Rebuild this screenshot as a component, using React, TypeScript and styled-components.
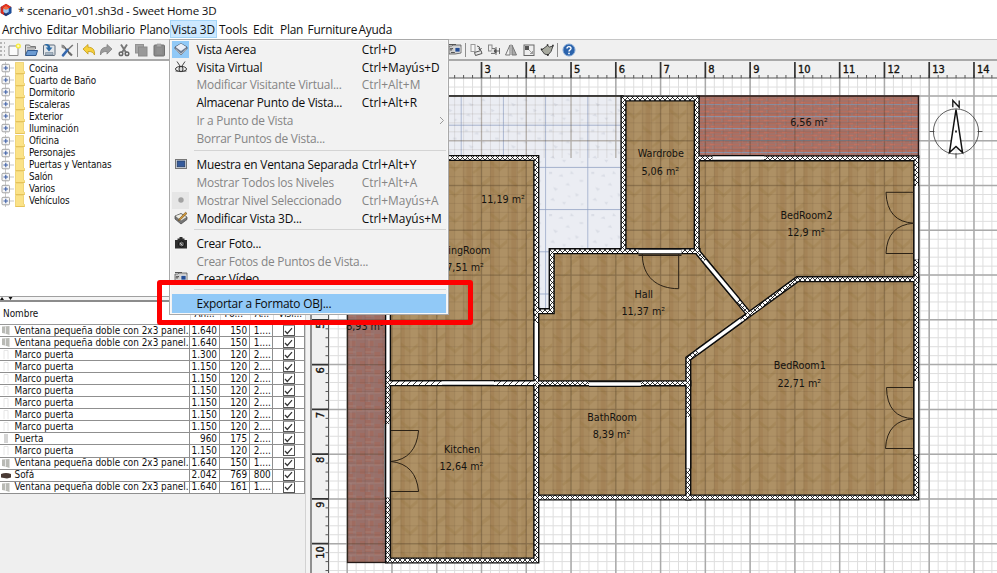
import React from "react";
import styled, { createGlobalStyle } from "styled-components";

const Global = createGlobalStyle`
  html, body { margin: 0; padding: 0; background: #fff; overflow: hidden; }
  *, *::before, *::after { box-sizing: border-box; }
`;

const uiFont = `"Open Sans", "Noto Sans", sans-serif`;
const denseFont = `"DejaVu Sans Condensed", "DejaVu Sans", sans-serif`;

const Window = styled.div`
  position: relative;
  width: 997px;
  height: 573px;
  display: flex;
  flex-direction: column;
  overflow: hidden;
  background: #fff;
  color: #111;
  font-family: ${uiFont};
`;

const TitleBar = styled.header`
  height: 20px;
  flex: none;
  display: flex;
  align-items: center;
  gap: 6px;
  font-size: 11.6px;
  letter-spacing: -0.18px;
  white-space: pre;
  svg { flex: none; }
`;

const MenuBar = styled.nav`
  height: 19px;
  flex: none;
  display: flex;
  font-size: 11.9px;
  letter-spacing: -0.22px;
`;

const MenuTitle = styled.div<{ $w: number; $active?: boolean }>`
  width: ${(p) => p.$w}px;
  flex: none;
  padding-left: 2px;
  height: 18px;
  line-height: 19px;
  white-space: nowrap;
  background: ${(p) => (p.$active ? "#cce8ff" : "transparent")};
  box-shadow: ${(p) => (p.$active ? "inset 0 0 0 1px #a4d5f8" : "none")};
`;

const Toolbar = styled.div`
  height: 22px;
  flex: none;
  display: flex;
  align-items: center;
  background: #f0f0f0;
  border-top: 1px solid #c6c6c6;
  border-bottom: 2px solid #a9a9a9;
`;

const ToolSlot = styled.div`
  width: 17.6px;
  height: 16px;
  flex: none;
  display: flex;
  align-items: center;
  justify-content: center;
`;

const Grip = styled.div`
  width: 5px;
  height: 15px;
  background: radial-gradient(circle at 1px 1px, #b5b5b5 1px, transparent 1.2px) 0 0 / 4px 4px;
`;

const ToolRule = styled.div<{ $before: number; $after: number }>`
  width: 1px;
  height: 14px;
  flex: none;
  margin: 0 ${(p) => p.$after}px 0 ${(p) => p.$before}px;
  background: #8e8e8e;
`;

const ToolGap = styled.div`
  width: 278px;
  flex: none;
`;

const Workspace = styled.div`
  flex: 1;
  display: flex;
  min-height: 0;
`;

const SidePane = styled.aside`
  width: 306px;
  flex: none;
  display: flex;
  flex-direction: column;
  background: #efefef;
  border-right: 1px solid #d2d2d2;
  font-family: ${denseFont};
`;

const Tree = styled.ul`
  list-style: none;
  margin: 0;
  padding: 1px 0 0;
  height: 235px;
  flex: none;
  background: #fff;
  font-size: 9.8px;
  letter-spacing: -0.12px;
`;

const TreeRow = styled.li`
  height: 12.09px;
  display: flex;
  align-items: center;
  white-space: nowrap;
  svg { flex: none; margin-right: 4px; }
`;

const PaneDivider = styled.div`
  height: 6px;
  flex: none;
  background: #f4f4f4;
  border-top: 1px solid #a0a0a0;
  border-bottom: 2px solid #8c8c8c;
  svg { display: block; }
`;

const columns = "189.5px 30px 30.2px 23.6px 31.7px";

const TableHead = styled.div`
  height: 22px;
  flex: none;
  display: grid;
  grid-template-columns: ${columns};
  align-items: center;
  background: #fff;
  font-size: 9.9px;
  line-height: 20px;
`;

const HeadCell = styled.div<{ $first?: boolean }>`
  padding-left: ${(p) => (p.$first ? 3 : 4)}px;
  border-left: ${(p) => (p.$first ? "none" : "1px solid #ddd")};
  height: 22px;
  line-height: 24px;
  white-space: nowrap;
`;

const TableBody = styled.div`
  flex: none;
  background: #fff;
  border-top: 1px solid #999;
`;

const TableRow = styled.div`
  height: 12.06px;
  display: grid;
  grid-template-columns: ${columns};
  font-size: 9.9px;
  line-height: 11.6px;
`;

const Cell = styled.div<{ $num?: boolean; $check?: boolean }>`
  display: flex;
  align-items: center;
  justify-content: ${(p) => (p.$num ? "flex-end" : p.$check ? "center" : "flex-start")};
  padding-right: ${(p) => (p.$num ? 1.5 : 0)}px;
  white-space: nowrap;
  overflow: hidden;
  border-right: 1px solid #8f8f8f;
  border-bottom: 1px solid #8f8f8f;
  svg { flex: none; }
`;

const CheckBox = styled.span`
  width: 12px;
  height: 11px;
  border: 1px solid #555;
  border-top-color: #999;
  display: flex;
  align-items: center;
  justify-content: center;
`;

const NameIcon = styled.span`
  width: 14.5px;
  flex: none;
  display: flex;
`;

const SideDivider = styled.div`
  width: 6px;
  flex: none;
  background: #f3f3f3;
  border-right: 2px solid #8f8f8f;
`;

const PlanSvg = styled.svg`
  width: 685px;
  height: 512px;
  flex: none;
  display: block;
  font-family: ${denseFont};
  text { fill: #151310; }
`;

const Popup = styled.div`
  position: absolute;
  left: 169px;
  top: 39px;
  width: 280px;
  height: 275.5px;
  padding: 0 2px;
  display: flex;
  flex-direction: column;
  background: #f2f2f2;
  border: 1px solid #a9a9a9;
  box-shadow: inset 0 0 0 1px #f8f8f8;
  font-size: 11.9px;
  letter-spacing: -0.22px;
`;

const Entry = styled.div<{ $h: number; $off?: boolean; $hot?: boolean; $strong?: boolean }>`
  height: ${(p) => p.$h}px;
  flex: none;
  display: grid;
  grid-template-columns: 24.5px 165.2px 1fr;
  align-items: center;
  white-space: nowrap;
  line-height: 16px;
  color: ${(p) => (p.$off ? "#858585" : "#0c0c0c")};
  background: ${(p) => (p.$hot ? "#91c9f7" : "transparent")};
`;

const EntryIcon = styled.span<{ $tint?: string }>`
  width: 17px;
  height: 17px;
  display: flex;
  align-items: center;
  justify-content: center;
  background: ${(p) => p.$tint || "transparent"};
`;

const Shortcut = styled.span`
  display: flex;
  align-items: center;
  justify-content: space-between;
  padding-right: 1px;
  letter-spacing: 0;
`;

const Rule = styled.div<{ $h: number }>`
  height: ${(p) => p.$h}px;
  flex: none;
  margin: 0 0 0 22px;
  padding-top: 3px;
  &::before { content: ""; display: block; height: 1px; background: #d4d4d4; }
`;

const RedFrame = styled.div`
  position: absolute;
  left: 156.6px;
  top: 280.4px;
  width: 316px;
  height: 45px;
  border: 5.4px solid #fe0000;
  border-radius: 3px;
`;

/* ---------- icons ---------- */

const Logo = () => (
  <svg width="12" height="14" viewBox="0 0 12 14">
    <path d="M6 1 11.3 4v6L6 13.3.7 10V4Z" fill="#24366f" />
    <path d="M6 .8 11.2 4 6 7 .8 4Z" fill="#e8341c" />
    <path d="M.7 4 4 6v6L.7 10Z" fill="#d62c1c" />
    <path d="M11.3 4 8 6v6l3.300-2Z" fill="#1b4f9d" />
    <path d="M3.300 5.500 6 3.500l2.700 2V9L6 10.500 3.300 9Z" fill="#9fc7ee" />
    <path d="m3 5.600 3-2.300 3 2.300-3 1.200Z" fill="#f36a3c" />
  </svg>
);

const VideoIcon = () => (
  <svg width="14" height="13" viewBox="0 0 14 13">
    <path d="M1 3h3l1-1h8v8l-6 1H1Z" fill="#d0d0d0" stroke="#555" strokeWidth=".8" />
    <path d="M1 1.500h7M2 5.500h3M3 9.500h4" stroke="#555" strokeWidth="1.200" />
    <rect x="7" y="4.500" width="5" height="4.500" fill="#244d95" stroke="#e6e6e6" strokeWidth=".7" />
    <circle cx="3" cy="6.500" r="1.300" fill="#777" />
  </svg>
);

const iconArt: Record<string, React.ReactNode> = {
  new: (
    <>
      <path d="M2 3h9v9.500H2Z" fill="#fbfbfb" stroke="#8d8d8d" />
      <circle cx="11.300" cy="3" r="2.600" fill="#f7ea3c" />
      <circle cx="11.300" cy="3" r="1.200" fill="#fffbc0" />
    </>
  ),
  open: (
    <>
      <path d="M1.500 12V2h4l1 1.500h5V6" fill="#d8d8d8" stroke="#777" />
      <path d="M3 4.500h8M3 6h8" stroke="#888" strokeWidth=".7" />
      <path d="M1.500 12.500 3.500 7.500H13.500L12 12.500Z" fill="#6c9bd2" stroke="#30598f" />
    </>
  ),
  save: (
    <>
      <rect x="1.500" y="2" width="11.500" height="10.500" rx="1" fill="#e2e6ea" stroke="#5f6d7c" />
      <path d="M3.500 9.500h7.500v2.500H3.500Z" fill="#a9b8c6" stroke="#68788a" strokeWidth=".5" />
      <path d="M2.500 1.500c3-1.200 5.500 0 5.800 3h2.200L7 8.500 3.700 4.500h2c0-1.500-1-2.400-3.200-3Z" fill="#2c6ca8" />
    </>
  ),
  prefs: (
    <>
      <path d="M3 2.500 11 12" stroke="#555" strokeWidth="1.600" />
      <path d="M1.500 1.500v3l2 1.200L5 4.500 3.500 2Z" fill="#8b8b8b" />
      <path d="M12.800 2 7.500 7" stroke="#777" strokeWidth="1.600" />
      <path d="M7.500 7 3 12.300" stroke="#3568ae" strokeWidth="2.600" strokeLinecap="round" />
      <path d="m9 9.500 3 3" stroke="#6c6c6c" strokeWidth="2" />
    </>
  ),
  undo: <path d="M1 6 6 1.500v2.700c4.500 0 7 2.300 6.500 7.800-1.200-2.600-3-3.700-6.500-3.500v2.600Z" fill="#f7d13b" stroke="#c29a1b" strokeWidth=".8" />,
  redo: <path d="M13 6 8 1.500v2.700c-4.500 0-7 2.300-6.500 7.800C2.700 9.400 4.500 8.300 8 8.500v2.600Z" fill="#9b9b9b" stroke="#808080" strokeWidth=".8" />,
  cut: (
    <>
      <path d="m4 1.500 5 8M10 1.500l-5 8" stroke="#777" strokeWidth="1.900" />
      <circle cx="4" cy="10.800" r="1.800" fill="none" stroke="#666" strokeWidth="1.500" />
      <circle cx="10" cy="10.800" r="1.800" fill="none" stroke="#666" strokeWidth="1.500" />
    </>
  ),
  copy: (
    <>
      <rect x="1.500" y="1.500" width="8" height="8.500" fill="#a5a5a5" stroke="#929292" />
      <rect x="4.500" y="4" width="8.500" height="9" fill="#999" stroke="#8a8a8a" />
    </>
  ),
  paste: (
    <>
      <rect x="2" y="2" width="10.500" height="11" rx="1" fill="#8a8a8a" stroke="#707070" />
      <path d="M5 1h4v2.500H5ZM4.500 6H10M4.500 8H10M4.500 10H10" fill="#aaa" stroke="#9b9b9b" strokeWidth=".7" />
    </>
  ),
  rotate: (
    <>
      <rect x="2" y="1.500" width="4" height="7" fill="#f6f6f6" stroke="#999" />
      <path d="M8 3q3 0 3 3.500M9.500 5.500 11 7l1.500-2" fill="none" stroke="#555" />
      <path d="m5.500 9.500 6.500-2 1 3-6.500 2Z" fill="#e8e8e8" stroke="#555" />
    </>
  ),
  align: (
    <>
      <rect x="1.500" y="2" width="3.500" height="6" fill="#eee" stroke="#888" />
      <path d="M5 5.500h3v5H4" fill="#ddd" stroke="#777" />
      <path d="M9 4v8M12.500 5v6M9 8h3.500M7 8l2-1.500V10Z" stroke="#555" fill="#555" strokeWidth=".9" />
    </>
  ),
  mirror: (
    <>
      <path d="M6 2v10H1.500Z" fill="#f1f1f1" stroke="#777" />
      <path d="M8 2v10h4.500Z" fill="#aaa" stroke="#777" />
      <path d="M7 1v12" stroke="#aaa" strokeDasharray="1 1" />
    </>
  ),
  resize: (
    <>
      <rect x="2" y="2" width="10" height="10.500" fill="#eee" stroke="#666" />
      <rect x="3" y="3" width="4" height="4" fill="#555" />
      <path d="m7 7 3.500 3.500M10.500 8v2.500H8" fill="none" stroke="#888" strokeWidth=".8" />
    </>
  ),
  polygon: (
    <>
      <path d="m1.500 7 6-4.500 2 1.500 3.500-1-2 5.500-3 3.500-3.500-1Z" fill="#a8aa9f" stroke="#464646" />
      <path d="M.8 6.300h1.600M6.800 2h1.500M12.200 2.500h1.500M7 12h1.700" stroke="#222" strokeWidth="1.500" />
    </>
  ),
  help: (
    <>
      <circle cx="7" cy="7" r="6" fill="#2b63ac" stroke="#7fa5d4" strokeWidth="1" />
      <path d="M5 5.500C5 3 9.200 3 9 5.500 8.900 7 7 6.800 7 8.500" fill="none" stroke="#fff" strokeWidth="1.400" />
      <circle cx="7" cy="10.400" r=".9" fill="#fff" />
    </>
  ),
  aerial: (
    <>
      <path d="M1 5 7 1.500 13 5v2L7 13 1 7Z" fill="#6f7c8f" stroke="#3a4453" strokeWidth=".7" />
      <path d="m1.500 5 5.500-3.400L12.500 5 7 9Z" fill="#e9eef8" />
      <path d="m1.300 7 5.700 5.300 5.700-5.300" fill="none" stroke="#f7f7f7" strokeWidth=".8" />
    </>
  ),
  visitor: (
    <>
      <path d="m3 1.500 3 4.500M11 1.500 8 6" stroke="#333" strokeWidth=".9" />
      <ellipse cx="7" cy="9" rx="5.500" ry="2.600" fill="none" stroke="#3a3a3a" />
      <ellipse cx="7" cy="9" rx="2" ry="2.600" fill="#ddd" stroke="#333" />
      <path d="M1.500 11h3M9.500 11h3" stroke="#444" />
    </>
  ),
  screen: (
    <>
      <rect x="1.500" y="2.500" width="11" height="9" fill="#cfd5dd" stroke="#777" />
      <rect x="3.200" y="4" width="7.600" height="5.800" fill="#355b9c" stroke="#22385f" strokeWidth=".7" />
    </>
  ),
  dot: <circle cx="7" cy="7" r="2.700" fill="#a2a2a2" />,
  edit3d: (
    <>
      <path d="m1 5 6-2.500L13 6v2.500L7 13 1 8Z" fill="#777" stroke="#444" strokeWidth=".7" />
      <path d="m1.500 5 5.500-2 5.500 3L7 9.500Z" fill="#eeeee6" />
      <path d="M5 8 11.500 1.200l1.500 1.300L6.500 8.700 4.500 9.500Z" fill="#d69b3b" stroke="#654617" strokeWidth=".6" />
    </>
  ),
  camera: (
    <>
      <path d="M1 4h2.500V2.500h2V1h3v1.500h2V4H13v8.500H1Z" fill="#2e2e2e" />
      <circle cx="7.500" cy="8" r="3" fill="#686868" stroke="#111" />
      <path d="M6 7l2.500 2.500" stroke="#ddd" strokeWidth=".8" />
    </>
  ),
};

const Icon = ({ name }: { name: string }) =>
  name === "video" ? (
    <VideoIcon />
  ) : (
    <svg width="14" height="14" viewBox="0 0 14 14" fill="none">
      {iconArt[name]}
    </svg>
  );

const FolderNode = () => (
  <svg width="25" height="12" viewBox="0 0 25 12">
    <path d="M5.500 0v12M10 6h4" stroke="#b9b9b9" strokeWidth=".8" />
    <rect x="2" y="2.300" width="7.500" height="7.500" rx="1" fill="#f6f6f6" stroke="#989898" strokeWidth=".9" />
    <path d="M3.500 6h4.600M5.800 3.700v4.600" stroke="#3c5ea6" strokeWidth="1.100" />
    <path d="M15.500.3h8V9l1 .5v2.200h-9Z" fill="#fbe287" stroke="#e8c85c" strokeWidth=".7" />
    <path d="M15.500 11.600h9" stroke="#dfb947" strokeWidth=".7" />
  </svg>
);

const RowIcon = ({ kind }: { kind: string }) => (
  <svg width="12" height="11" viewBox="0 0 12 11">
    {kind === "w" && (
      <>
        <path d="M2 1.500 9.500 1v9L5 8.500 2 8Z" fill="#b9bab5" />
        <path d="M5.500 1.500v7.300" stroke="#e8e8e8" />
      </>
    )}
    {kind === "m" && <path d="M4 10V1.500h4V10" fill="none" stroke="#e3e3e3" strokeWidth=".9" />}
    {kind === "p" && <rect x="4" y="1" width="4" height="9" fill="#d4d4d4" />}
    {kind === "s" && <path d="M1 4q5-2 10 0v3.500L7 8.500 1 7.500Z" fill="#493a34" />}
  </svg>
);

/* ---------- data ---------- */

const categories = [
  "Cocina", "Cuarto de Baño", "Dormitorio", "Escaleras", "Exterior", "Iluminación",
  "Oficina", "Personajes", "Puertas y Ventanas", "Salón", "Varios", "Vehículos",
];

const win = "Ventana pequeña doble con 2x3 panel...";
const furniture: string[][] = [
  ["w", win, "1.640", "150", "1...."],
  ["w", win, "1.640", "150", "1...."],
  ["m", "Marco puerta", "1.300", "120", "2...."],
  ["m", "Marco puerta", "1.150", "120", "2...."],
  ["m", "Marco puerta", "1.150", "120", "2...."],
  ["m", "Marco puerta", "1.150", "120", "2...."],
  ["m", "Marco puerta", "1.150", "120", "2...."],
  ["m", "Marco puerta", "1.150", "120", "2...."],
  ["m", "Marco puerta", "1.150", "120", "2...."],
  ["p", "Puerta", "960", "175", "2...."],
  ["m", "Marco puerta", "1.150", "120", "2...."],
  ["w", win, "1.640", "150", "1...."],
  ["s", "Sofá", "2.042", "769", "800"],
  ["w", win, "1.640", "161", "1...."],
];

const menus: [string, number][] = [
  ["Archivo", 44.5], ["Editar", 35], ["Mobiliario", 58], ["Plano", 32], ["Vista 3D", 47.5],
  ["Tools", 34], ["Edit", 27], ["Plan", 27.5], ["Furniture", 51], ["Ayuda", 40],
];

type EntryData = { rule?: number; h?: number; icon?: string; tint?: string; label?: string; keys?: string; off?: boolean; hot?: boolean; sub?: boolean };
const entries: EntryData[] = [
  { h: 18, icon: "aerial", tint: "#91c9f7", label: "Vista Aerea", keys: "Ctrl+D" },
  { h: 17, icon: "visitor", label: "Visita Virtual", keys: "Ctrl+Mayús+D" },
  { h: 18, label: "Modificar Visitante Virtual...", keys: "Ctrl+Alt+M", off: true },
  { h: 18, label: "Almacenar Punto de Vista...", keys: "Ctrl+Alt+R" },
  { h: 18, label: "Ir a Punto de Vista", off: true, sub: true },
  { h: 18, label: "Borrar Puntos de Vista...", off: true },
  { rule: 8 },
  { h: 18, icon: "screen", label: "Muestra en Ventana Separada", keys: "Ctrl+Alt+Y" },
  { h: 18, label: "Mostrar Todos los Niveles", keys: "Ctrl+Alt+A", off: true },
  { h: 18, icon: "dot", tint: "#e6e6e6", label: "Mostrar Nivel Seleccionado", keys: "Ctrl+Mayús+A", off: true },
  { h: 17, icon: "edit3d", label: "Modificar Vista 3D...", keys: "Ctrl+Mayús+M" },
  { rule: 8 },
  { h: 18, icon: "camera", label: "Crear Foto..." },
  { h: 17, label: "Crear Fotos de Puntos de Vista...", off: true },
  { h: 17, icon: "video", label: "Crear Vídeo..." },
  { rule: 8 },
  { h: 18.5, label: "Exportar a Formato OBJ...", hot: true },
];

/* ---------- plan ---------- */

const CELL = 44.77;
const X0 = 347.2;
const Y0 = 96;
const range = (a: number, b: number) => Array.from({ length: b - a + 1 }, (_, i) => a + i);

const gridPath = (step: number) => {
  const v = range(-5, 75).map((i) => X0 + i * step).filter((x) => x > 329 && x < 997);
  const h = range(-2, 60).map((i) => Y0 + i * step).filter((y) => y > 79 && y < 573);
  return v.map((x) => `M${x} 78V573`).join("") + h.map((y) => `M329 ${y}H997`).join("");
};

const wood = [
  "M388 158H536V560H388Z",
  "M536 383V311H551.700V251H697L748.500 313.500 688.300 358.500V383Z",
  "M536 383H688.300V497.500H536Z",
  "M623.500 98.500H697V251H623.500Z",
  "M697 158.300H916.300V279H797.500L748.500 313.500 697 251Z",
  "M797.500 279H916.300V497.500H688.300V358.500Z",
];

const walls = [
  "M388 158H536.300V560.500H388Z",
  "M536.300 383.300H688.300",
  "M536.300 497.500H916.300V158.300H697",
  "M536.300 311.200H551.700V251.200H697.500",
  "M623.500 251V98.500H696.700V251L748.500 313.500",
  "M688.300 497.500V358.500L797.500 279.200H916.300",
];

const openings: [number, number, number, number][] = [
  [388, 200, 388, 370], [388, 424, 388, 497.500], [442, 383, 494, 383], [589, 384, 641, 384],
  [536.300, 323, 536.300, 375], [638.500, 251.500, 681.500, 251.500], [712.500, 158, 764, 158],
  [916.300, 186, 916.300, 259.500], [916.300, 381, 916.300, 454.500], [688.300, 417, 688.300, 468.500],
  [704.500, 260.500, 738, 300.700], [697.500, 351.800, 741, 320.200],
];

const rooms: [string, string, number, number][] = [
  ["Wardrobe", "5,06 m²", 660.8, 157], ["BedRoom2", "12,9 m²", 806.5, 218.5],
  ["BedRoom1", "22,71 m²", 799.8, 368.700], ["Hall", "11,37 m²", 643.8, 297.500],
  ["BathRoom", "8,39 m²", 612, 420.500], ["Kitchen", "12,64 m²", 462, 452.500],
  ["LivingRoom", "27,51 m²", 462.500, 253.500],
];

const Plan = () => (
  <PlanSvg viewBox="312 61 685 512">
    <defs>
      <pattern id="wood" width="44.770" height="26" patternUnits="userSpaceOnUse" x="347" y="96">
        <rect width="45" height="26" fill="#a98b5f" />
        <path d="M0 0h9v26H0ZM18 0h8v26h-8ZM36 0h4v26h-4Z" fill="#b3956a" opacity=".55" />
        <path d="M9 0h4v26H9ZM30 0h5v26h-5Z" fill="#997647" opacity=".35" />
        <path d="M0 9 9 2v5L0 14ZM18 20l8-7v4l-8 7ZM9 16l9 7v-4l-9-7ZM27 7l9 7v-4l-9-7ZM36 24l9-8v4l-8 6Z" fill="#93733f" opacity=".26" />
      </pattern>
      <pattern id="marble" width="42.200" height="42.200" patternUnits="userSpaceOnUse" x="460.700" y="124.700">
        <rect width="43" height="43" fill="#ebedf3" />
        <path d="M4 5h3v2H4ZM13 9l4-2 1 3ZM26 4l3 3h-4ZM34 13h4v2h-3ZM8 20l5 2-3 2ZM20 18l3-2 2 3ZM30 26l4 2-3 2ZM5 33l3-2 2 3ZM17 35h4l-2 3ZM36 36l3 1-3 2ZM22 29h3v2Z" fill="#d6d9e2" opacity=".8" />
        <path d="M0 0H42.200M0 0V42.200" stroke="#8b9cc0" strokeWidth="1.300" fill="none" />
      </pattern>
      <pattern id="brick" width="18" height="12" patternUnits="userSpaceOnUse" x="699" y="104">
        <rect width="18" height="12" fill="#b36e5e" />
        <path d="M0 3h18M0 6h18M0 9h18" stroke="#927673" strokeWidth=".9" />
        <path d="M3 1.500h5M11 4.500h5M5 7.500h5M12 10.500h4" stroke="#c17260" strokeWidth="1.600" />
        <path d="M5 3v3M14 6v3M9 9v3M13 0v3" stroke="#8f8284" strokeWidth=".8" />
        <path d="M0 .5h18" stroke="#8c91a5" strokeWidth="1.400" />
      </pattern>
      <pattern id="paver" width="18" height="18" patternUnits="userSpaceOnUse" x="347" y="96">
        <rect width="18" height="18" fill="#99706a" />
        <path d="M0 0h6v6H0ZM9 4h6v5H9ZM3 11h6v5H3ZM13 13h5v5h-5Z" fill="#a4675a" opacity=".6" />
        <path d="M0 9h18M9 0v18M0 4h9M4 9v9" stroke="#a98c86" strokeWidth=".7" opacity=".7" />
      </pattern>
      <pattern id="hatch" width="5" height="5" patternUnits="userSpaceOnUse">
        <rect width="5" height="5" fill="#fff" />
        <path d="M0 0 5 5M5 0 0 5" stroke="#111" strokeWidth=".85" />
      </pattern>
      <pattern id="slash" width="6" height="6" patternUnits="userSpaceOnUse">
        <rect width="6" height="6" fill="#fff" />
        <path d="M-1 7 7-1M-1 1 1-1M5 7 7 5" stroke="#222" strokeWidth=".9" />
      </pattern>
      <clipPath id="floors">
        <path d={wood.join("") + "M347 96H918.500V158H536V562.500H347Z"} />
      </clipPath>
    </defs>

    <rect x="312" y="61" width="685" height="512" fill="#fff" />
    <path d={gridPath(CELL / 5)} stroke="#dedede" strokeWidth="1" fill="none" />
    <path d={gridPath(CELL)} stroke="#aaa" strokeWidth="1.500" fill="none" />

    <path d="M347.500 96H623V251H551.700V311H536V158H347.500Z" fill="url(#marble)" stroke="#111" strokeWidth="1.300" />
    <rect x="347.500" y="158" width="40" height="404.500" fill="url(#paver)" stroke="#251b19" strokeWidth="1.300" />
    <rect x="697" y="96" width="221.500" height="62" fill="url(#brick)" stroke="#241514" strokeWidth="1.500" />
    <path d={wood.join("")} fill="url(#wood)" />
    <g clipPath="url(#floors)" fill="none">
      <path d={gridPath(CELL / 5)} stroke="#4e3a24" strokeWidth=".9" opacity=".12" />
      <path d={gridPath(CELL)} stroke="#4e3a24" strokeWidth="1.400" opacity=".27" />
    </g>

    <g fill="none" strokeLinejoin="miter" strokeLinecap="square">
      {walls.map((d) => <path key={d} d={d} stroke="#0c0c0c" strokeWidth="6.200" />)}
      {walls.map((d) => <path key={d} d={d} stroke="url(#hatch)" strokeWidth="3.400" />)}
    </g>
    <path d="M391 383.200H534" stroke="#0c0c0c" strokeWidth="6.200" />
    <path d="M389 381.500H535V384.900H389Z" fill="url(#slash)" />

    {openings.map(([a, b, c, d]) => (
      <g key={`${a}-${b}`}>
        <line x1={a} y1={b} x2={c} y2={d} stroke="#0c0c0c" strokeWidth="6" />
        <line x1={a} y1={b} x2={c} y2={d} stroke="#fff" strokeWidth="3.400" />
      </g>
    ))}

    <g fill="none" stroke="#2b2115" strokeWidth="1">
      <path d="M914 192.300H886Q887 222 914 223.200Q887 225 886 253.500H914" />
      <path d="M914 387.500H886.500Q887 418 914 418.700Q887 420 885.500 448.500H914" />
      <path d="M391 430.500H418.600Q416 459 391 461.500Q416 464 418.600 491.500H391" />
      <path d="M642.300 254C642.300 277 657 288.700 678.700 288.700V254M638.500 255.500H681.500" />
      <path d="M919 186V259M919 381V454M384.500 424V497" stroke="#777" />
    </g>

    <g fontSize="10.700" textAnchor="middle">
      {rooms.map(([name, area, x, y]) => (
        <React.Fragment key={name}>
          <text x={x} y={y}>{name}</text>
          <text x={x - 0.5} y={y + 17.800}>{area}</text>
        </React.Fragment>
      ))}
      <text x="503" y="203">11,19 m²</text>
      <text x="809" y="126">6,56 m²</text>
      <text x="365" y="329.500">8,93 m²</text>
    </g>

    <g stroke="#333" fill="none">
      <circle cx="956" cy="131.500" r="22.600" strokeWidth=".8" />
      <path d="M929.500 131.500h5M977.500 131.500h5M956 153v5.500" strokeWidth=".8" />
      <path d="M956 109.500 949.500 152.500 956 146.500 962.500 152.500Z" stroke="#111" strokeWidth="1.500" fill="#fff" />
      <path d="M952.800 107.300V100.500L959.200 107.300V100.500" stroke="#111" strokeWidth="1.300" />
      <rect x="955.500" y="131" width="1" height="1" fill="#111" />
    </g>

    <path d="M312 61H997V78H329V573H312Z" fill="#f0f0f0" />
    <path
      d={"M329 78H997M328.500 78V573" + range(0, 74).map((i) => `M${X0 + (i * CELL) / 5} 75V78`).join("") + range(0, 53).map((i) => `M325.500 ${Y0 + (i * CELL) / 5}H328.500`).join("")}
      stroke="#555" strokeWidth="1" fill="none"
    />
    <path
      d={range(0, 14).map((i) => `M${X0 + i * CELL} 62V78`).join("") + range(0, 10).map((i) => `M312 ${Y0 + i * CELL}H328.500`).join("")}
      stroke="#333" strokeWidth="1.700" fill="none"
    />
    <g fontSize="11" stroke="#151310" strokeWidth=".35">
      {range(0, 14).map((i) => <text key={i} x={X0 + i * CELL + 3} y="73.300">{i}</text>)}
      {range(0, 10).map((i) => (
        <text key={i} textAnchor="end" transform={`translate(324.300 ${Y0 + i * CELL + 2.500}) rotate(-90)`}>{i}</text>
      ))}
    </g>
  </PlanSvg>
);

const leftTools = ["new", "open", "save", "prefs"];
const editTools = ["undo", "redo", "cut", "copy", "paste"];
const planTools = ["rotate", "align", "mirror", "resize", "polygon"];
const slots = (names: string[]) => names.map((n) => <ToolSlot key={n}><Icon name={n} /></ToolSlot>);

export default function App() {
  return (
    <>
      <Global />
      <Window>
        <TitleBar><Logo />* scenario_v01.sh3d - Sweet Home 3D</TitleBar>
        <MenuBar>
          {menus.map(([label, w]) => (
            <MenuTitle key={label} $w={w} $active={label === "Vista 3D"}>{label}</MenuTitle>
          ))}
        </MenuBar>
        <Toolbar>
          <Grip />
          {slots(leftTools)}
          <ToolRule $before={1.5} $after={2} />
          {slots(editTools)}
          <ToolGap />
          <ToolSlot><Icon name="video" /></ToolSlot>
          <ToolRule $before={2} $after={1} />
          {slots(planTools)}
          <ToolRule $before={2} $after={1.5} />
          <ToolSlot><Icon name="help" /></ToolSlot>
        </Toolbar>
        <Workspace>
          <SidePane>
            <Tree>
              {categories.map((c) => <TreeRow key={c}><FolderNode />{c}</TreeRow>)}
            </Tree>
            <PaneDivider>
              <svg width="16" height="3" viewBox="0 0 16 3"><path d="M0 3 2 0l2 3ZM8.500 0h4l-2 3Z" fill="#111" /></svg>
            </PaneDivider>
            <TableHead>
              <HeadCell $first>Nombre</HeadCell>
              <HeadCell>An...</HeadCell>
              <HeadCell>Fo...</HeadCell>
              <HeadCell>A...</HeadCell>
              <HeadCell>Visi...</HeadCell>
            </TableHead>
            <TableBody>
              {furniture.map(([kind, name, w, d, h], i) => (
                <TableRow key={i}>
                  <Cell><NameIcon><RowIcon kind={kind} /></NameIcon>{name}</Cell>
                  <Cell $num>{w}</Cell>
                  <Cell $num>{d}</Cell>
                  <Cell $num>{h}</Cell>
                  <Cell $check>
                    <CheckBox>
                      <svg width="9" height="8" viewBox="0 0 9 8"><path d="m1 4 2.300 2.500L8 1.200" fill="none" stroke="#333" strokeWidth="1.200" /></svg>
                    </CheckBox>
                  </Cell>
                </TableRow>
              ))}
            </TableBody>
          </SidePane>
          <SideDivider />
          <Plan />
        </Workspace>

        <Popup>
          {entries.map((e, i) =>
            e.rule ? (
              <Rule key={i} $h={e.rule} />
            ) : (
              <Entry key={i} $h={e.h || 18} $off={e.off} $hot={e.hot}>
                <EntryIcon $tint={e.tint}>{e.icon && <Icon name={e.icon} />}</EntryIcon>
                <span>{e.label}</span>
                <Shortcut>
                  {e.keys || <i />}
                  {e.sub && <svg width="6" height="9" viewBox="0 0 6 9"><path d="m1 1 3.500 3.500L1 8" fill="none" stroke="#9a9a9a" /></svg>}
                </Shortcut>
              </Entry>
            )
          )}
        </Popup>
        <RedFrame />
      </Window>
    </>
  );
}
